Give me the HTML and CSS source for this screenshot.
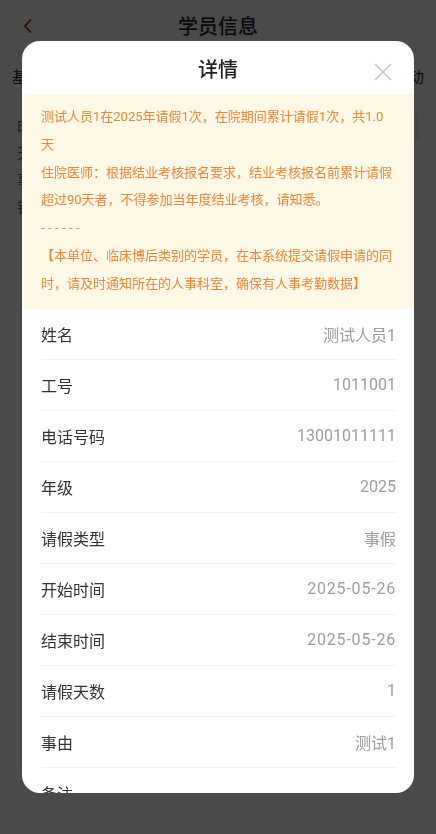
FILE: index.html
```html
<!DOCTYPE html>
<html>

<head>
    <meta charset="utf-8">
    <title>学员信息</title>
    <link rel="stylesheet" href="styles.css">
</head>

<body>
    <div class="page">
        <header class="topbar">
            <svg class="back" viewBox="0 0 12 16" width="12" height="16">
                <path d="M9 1.5 L3 8 L9 14.5" fill="none" stroke="#9a2323" stroke-width="1.8" />
            </svg>
            <span class="topbar-title">学员信息</span>
        </header>
        <nav class="tabs">
            <span>基本信息</span>
            <span>培训记录</span>
            <span>考核成绩</span>
            <span>请假活动</span>
        </nav>
        <section class="summary">
            <div class="summary-lines">
                <p>时间</p>
                <p>天数</p>
                <p>事由</p>
                <p>销假</p>
            </div>
            <span class="summary-btn"></span>
        </section>
    </div>

    <!-- 遮罩和弹窗放在后面，盖住页面 -->
    <div class="mask">
        <div class="dialog">
            <div class="dialog-head">
                <span class="dialog-title">详情</span>
                <svg class="close" viewBox="0 0 20 20" width="20" height="20">
                    <path d="M2 2 L18 18 M18 2 L2 18" fill="none" stroke="#c8c8c8" stroke-width="1.7" />
                </svg>
            </div>
            <div class="dialog-body">
                <div class="notice">
                    <p>测试人员1在2025年请假1次，在院期间累计请假1次，共1.0天</p>
                    <p>住院医师：根据结业考核报名要求，结业考核报名前累计请假超过90天者，不得参加当年度结业考核，请知悉。</p>
                    <p class="dash">------</p>
                    <p>【本单位、临床博后类别的学员，在本系统提交请假申请的同时，请及时通知所在的人事科室，确保有人事考勤数据】</p>
                </div>
                <ul class="fields">
                    <li><span>姓名</span><span class="val">测试人员1</span></li>
                    <li><span>工号</span><span class="val">1011001</span></li>
                    <li><span>电话号码</span><span class="val">13001011111</span></li>
                    <li><span>年级</span><span class="val">2025</span></li>
                    <li><span>请假类型</span><span class="val">事假</span></li>
                    <li><span>开始时间</span><span class="val date">2025-05-26</span></li>
                    <li><span>结束时间</span><span class="val date">2025-05-26</span></li>
                    <li><span>请假天数</span><span class="val">1</span></li>
                    <li><span>事由</span><span class="val">测试1</span></li>
                    <li><span>备注</span><span class="val"></span></li>
                </ul>
            </div>
        </div>
    </div>
</body>

</html>
```

FILE: styles.css
```css
html,
body {
    margin: 0;
    padding: 0;
    width: 100%;
    height: 100%;
}

body {
    background-color: #fff;
    color: #333;
    font-family: Roboto, "Noto Sans CJK SC", sans-serif;
    overflow: hidden;
}

p {
    margin: 0;
}

.topbar {
    height: 52px;
    display: flex;
    align-items: center;
    justify-content: center;
    position: relative;
    border-bottom: 1px solid #eee;
    box-sizing: border-box;
}

.back {
    position: absolute;
    left: 22px;
    top: 18px;
}

.topbar-title {
    font-size: 20px;
    font-weight: 500;
    color: #222;
}

.tabs {
    height: 48px;
    display: flex;
    justify-content: space-between;
    align-items: center;
    padding: 0 12px;
    font-size: 16px;
    color: #333;
}

.summary {
    margin: 0 12px;
    display: flex;
    justify-content: space-between;
    align-items: flex-start;
    padding: 14px 5px;
}

.summary-lines p {
    font-size: 15px;
    line-height: 27px;
    color: #666;
}

.summary-btn {
    width: 30px;
    height: 26px;
    background-color: #f4e9e9;
    border-radius: 4px;
}

.mask {
    position: fixed;
    left: 0;
    top: 0;
    right: 0;
    bottom: 0;
    background-color: rgba(0, 0, 0, 0.71);
    display: flex;
    align-items: center;
    justify-content: center;
}

.dialog {
    width: 392px;
    height: 752px;
    background-color: #fff;
    border-radius: 18px;
    overflow: hidden;
    display: flex;
    flex-direction: column;
}

.dialog-head {
    height: 53px;
    flex-shrink: 0;
    display: flex;
    align-items: center;
    justify-content: center;
    position: relative;
}

.dialog-title {
    font-size: 20px;
    font-weight: 500;
    color: #222;
    margin-top: 1px;
}

.close {
    position: absolute;
    right: 21px;
    top: 21px;
}

.dialog-body {
    flex: 1;
    overflow: hidden;
}

.notice {
    background-color: #fff8e7;
    padding: 9px 19px 11px 19px;
    font-size: 13px;
    line-height: 27.8px;
    color: #ea873a;
}

.notice .dash {
    letter-spacing: 3.4px;
}

.fields {
    list-style: none;
    margin: 0;
    padding: 0 18px 0 19px;
}

.fields li {
    height: 51px;
    display: flex;
    align-items: center;
    justify-content: space-between;
    border-bottom: 1px solid #f2f2f2;
    box-sizing: border-box;
    font-size: 16px;
    color: #333;
}

.fields .val {
    color: #9d9d9d;
}

.fields .date {
    letter-spacing: 0.8px;
}
```
